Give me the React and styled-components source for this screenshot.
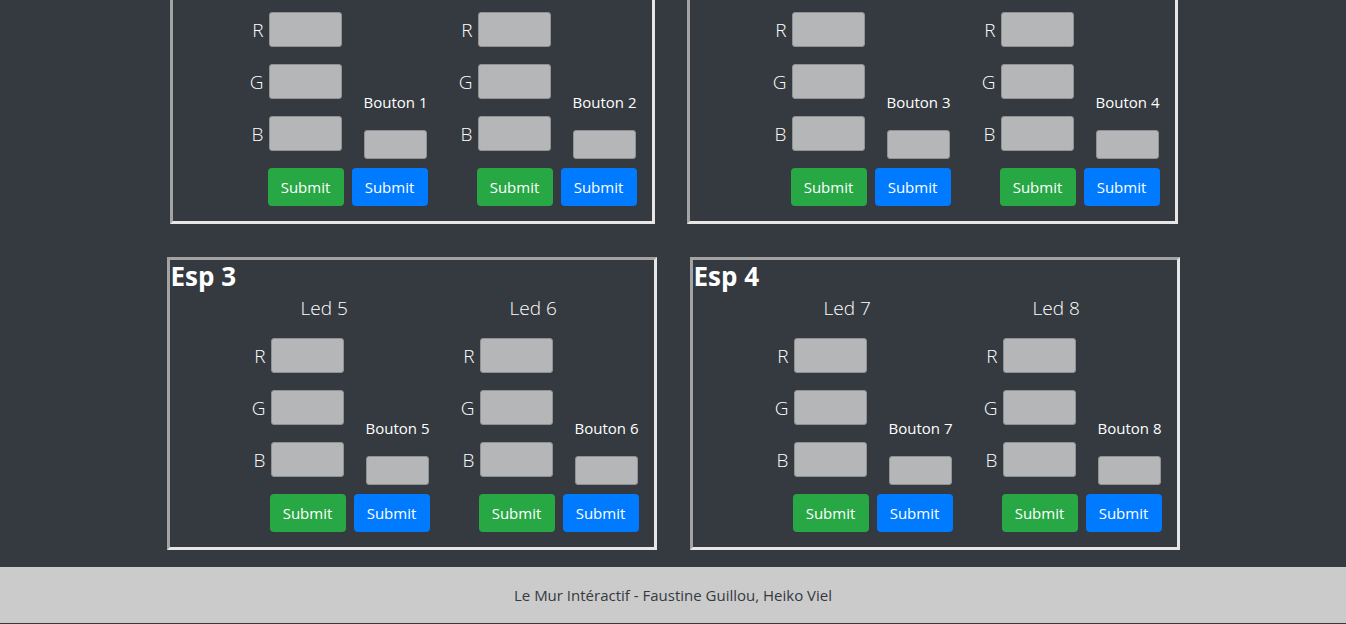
import React from "react";
import styled, { createGlobalStyle } from "styled-components";

const GlobalStyle = createGlobalStyle`
  html, body {
    margin: 0;
    padding: 0;
    background-color: #343a40;
    font-family: "Open Sans", "Noto Sans", sans-serif;
    color: #ffffff;
    overflow: hidden;
  }
`;

const Page = styled.div`
  min-height: 624px;
  display: flex;
  flex-direction: column;
`;

const Board = styled.main`
  margin-top: -69px;
  display: grid;
  grid-template-columns: repeat(2, 490px);
  column-gap: 33px;
  row-gap: 33px;
  justify-content: center;
`;

const EspBox = styled.section`
  box-sizing: border-box;
  height: 293px;
  margin-left: ${props => props.$ml || 0}px;
  margin-right: ${props => props.$mr || 0}px;
  border: 3px solid;
  border-color: #a3a3a3 #e6e6e6 #e6e6e6 #a3a3a3;
  padding: 0 15px 15px 1px;
  display: flex;
  flex-direction: column;
`;

const EspTitle = styled.h2`
  margin: 0;
  font-size: 26px;
  font-weight: 700;
  line-height: 32px;
`;

const Groups = styled.div`
  display: flex;
  justify-content: flex-end;
  gap: 20px;
`;

const LedGroup = styled.div`
  width: 189px;
  display: flex;
  flex-direction: column;
`;

const LedTitle = styled.div`
  margin-top: 4px;
  padding-left: 60px;
  font-size: 19px;
  font-weight: 300;
  line-height: 24px;
`;

const LedBody = styled.div`
  margin-top: 18px;
  display: flex;
  align-items: flex-end;
  gap: 8px;
`;

const ColorGrid = styled.div`
  display: grid;
  grid-template-columns: 29px 76px;
  grid-template-rows: 35px 35px 35px 38px;
  row-gap: 17px;
  align-items: center;
`;

const ColorLabel = styled.label`
  text-align: right;
  padding-right: 4px;
  padding-top: 2px;
  font-size: 19px;
  font-weight: 300;
  line-height: 33px;
`;

const ValueInput = styled.input`
  box-sizing: border-box;
  width: ${props => props.$w}px;
  height: ${props => props.$h}px;
  justify-self: ${props => props.$align || "center"};
  margin: 0;
  background-color: #b5b6b8;
  border: 1px solid #909294;
  border-radius: 3px;
  outline: none;
`;

const ButtonColumn = styled.div`
  width: 76px;
  display: flex;
  flex-direction: column;
  align-items: flex-end;
`;

const ButtonLabel = styled.div`
  font-size: 15px;
  line-height: 20px;
  white-space: nowrap;
`;

const SmallSlot = styled.div`
  margin-top: 18px;
  margin-bottom: 9px;
  padding-right: 1px;
`;

const SubmitButton = styled.button`
  grid-column: ${props => (props.$inGrid ? "2" : "auto")};
  box-sizing: border-box;
  width: 76px;
  height: 38px;
  border: none;
  border-radius: 4px;
  background-color: ${props => (props.$variant === "blue" ? "#007bff" : "#28a745")};
  color: #ffffff;
  font-family: "Open Sans", "Noto Sans", sans-serif;
  font-size: 15px;
  cursor: pointer;
  padding: 0;
`;

const Footer = styled.footer`
  margin-top: 17px;
  height: 56px;
  background-color: #cbcbcb;
  color: #343a40;
  font-size: 15px;
  display: flex;
  align-items: center;
  justify-content: center;
`;

function Led({ led, button }) {
  return (
    <LedGroup>
      <LedTitle>Led {led}</LedTitle>
      <LedBody>
        <ColorGrid>
          {["R", "G", "B"].map(c => (
            <React.Fragment key={c}>
              <ColorLabel>{c}</ColorLabel>
              <ValueInput type="text" $w={73} $h={35} />
            </React.Fragment>
          ))}
          <SubmitButton $inGrid>Submit</SubmitButton>
        </ColorGrid>
        <ButtonColumn>
          <ButtonLabel>Bouton {button}</ButtonLabel>
          <SmallSlot>
            <ValueInput type="text" $w={63} $h={29} $align="end" />
          </SmallSlot>
          <SubmitButton $variant="blue">Submit</SubmitButton>
        </ButtonColumn>
      </LedBody>
    </LedGroup>
  );
}

// the first row of boxes sits a few pixels off the second in the page
const insets = {
  1: { ml: 3, mr: 2 },
  2: { ml: -3, mr: 2 },
  3: { ml: 0, mr: 0 },
  4: { ml: 0, mr: 0 },
};

function Esp({ id }) {
  const first = id * 2 - 1;
  return (
    <EspBox $ml={insets[id].ml} $mr={insets[id].mr}>
      <EspTitle>Esp {id}</EspTitle>
      <Groups>
        <Led led={first} button={first} />
        <Led led={first + 1} button={first + 1} />
      </Groups>
    </EspBox>
  );
}

export default function App() {
  return (
    <Page>
      <GlobalStyle />
      <Board>
        {[1, 2, 3, 4].map(id => (
          <Esp key={id} id={id} />
        ))}
      </Board>
      <Footer>Le Mur Intéractif - Faustine Guillou, Heiko Viel</Footer>
    </Page>
  );
}
